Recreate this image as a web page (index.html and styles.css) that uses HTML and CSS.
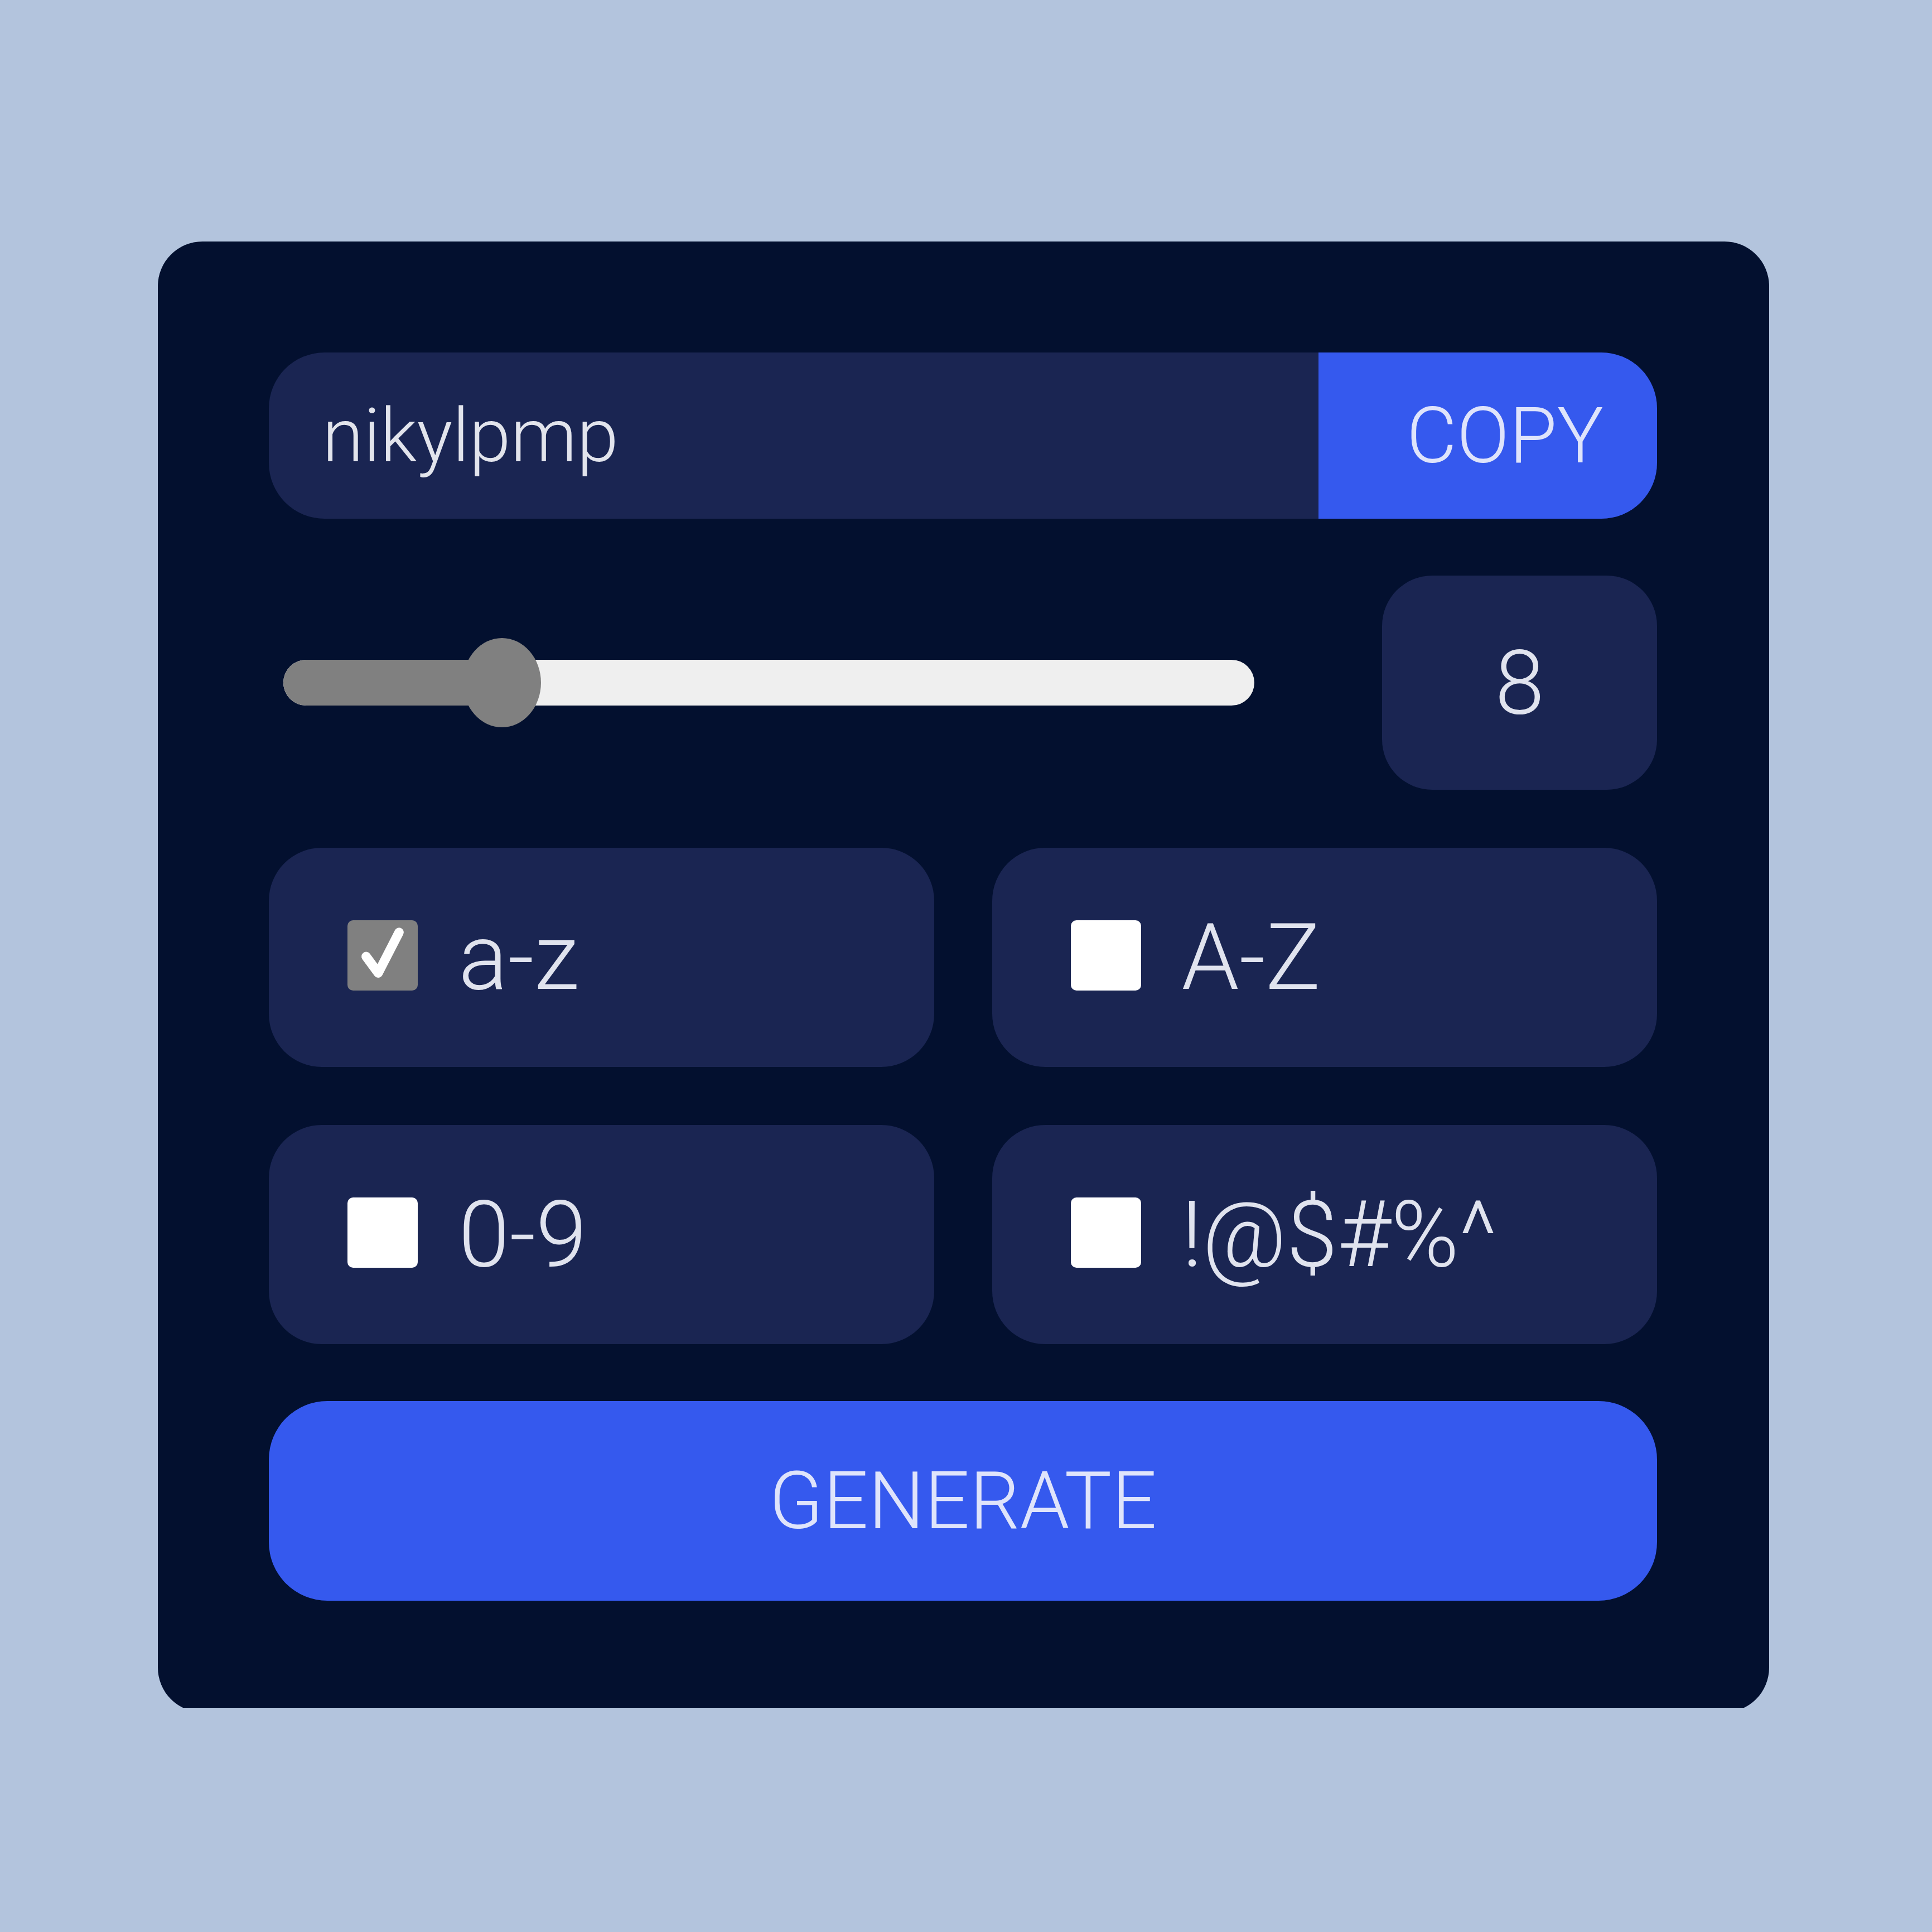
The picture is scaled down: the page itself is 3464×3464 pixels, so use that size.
FILE: index.html
```html
<!DOCTYPE html>
<html lang="en">
<head>
<meta charset="utf-8">
<title>Password Generator</title>
<link rel="stylesheet" href="styles.css">
</head>
<body>
<div class="stage">
  <div class="card">
    <div class="field">
      <div class="pw">nikylpmp</div>
      <div class="copy">COPY</div>
    </div>

    <div class="length-row">
      <div class="slider">
        <div class="track">
          <div class="fill" style="width:22.5%"></div>
          <div class="thumb" style="left:22.5%"></div>
        </div>
      </div>
      <div class="number">8</div>
    </div>

    <div class="options">
      <div class="option">
        <span class="box checked">
          <svg viewBox="0 0 128 128" width="128" height="128"><path d="M34 66 L56 96 L94 22" fill="none" stroke="#ffffff" stroke-width="17" stroke-linecap="round" stroke-linejoin="round"/></svg>
        </span>
        <span class="label">a-z</span>
      </div>
      <div class="option">
        <span class="box"></span>
        <span class="label">A-Z</span>
      </div>
      <div class="option">
        <span class="box"></span>
        <span class="label">0-9</span>
      </div>
      <div class="option">
        <span class="box"></span>
        <span class="label">!@$#%^</span>
      </div>
    </div>

    <div class="generate">GENERATE</div>
  </div>
</div>
</body>
</html>
```

FILE: styles.css
```css
html, body {
  margin: 0;
  padding: 0;
  background: #b3c4dd;
}

body {
  font-family: Roboto, "Liberation Sans", Arial, sans-serif;
  font-weight: 300;
  color: #e0e3ee;
}

.stage {
  height: 3062px;
  overflow: hidden;
  padding: 433px 0 0 283px;
  box-sizing: border-box;
}

.card {
  width: 2889px;
  box-sizing: border-box;
  background: #03102f;
  border-radius: 80px;
  padding: 199px 201px 200px 199px;
  display: flex;
  flex-direction: column;
  gap: 102px;
}

.field {
  display: flex;
  height: 298px;
  border-radius: 100px;
  overflow: hidden;
  background: #1a2552;
}

.pw {
  flex: 1;
  display: flex;
  align-items: center;
  padding-left: 96px;
  font-size: 134px;
  color: #e2e4ec;
}

.copy {
  width: 607px;
  box-sizing: border-box;
  background: #3559ee;
  display: flex;
  align-items: center;
  justify-content: flex-end;
  padding-right: 96px;
  font-size: 139px;
  color: #dfe4fb;
}

.length-row {
  display: flex;
  align-items: center;
  gap: 229px;
  height: 384px;
}

.slider {
  flex: 1;
  padding-left: 26px;
}

.track {
  position: relative;
  height: 82px;
  border-radius: 41px;
  background: #efefef;
}

.fill {
  height: 100%;
  border-radius: 41px 0 0 41px;
  background: #808080;
}

.thumb {
  position: absolute;
  top: 50%;
  width: 140px;
  height: 160px;
  margin-left: -70px;
  margin-top: -80px;
  border-radius: 50%;
  background: #808080;
}

.number {
  width: 493px;
  height: 384px;
  border-radius: 90px;
  background: #1a2552;
  display: flex;
  align-items: center;
  justify-content: center;
  font-size: 160px;
  color: #e0e3ee;
}

.options {
  display: grid;
  grid-template-columns: 1fr 1fr;
  column-gap: 104px;
  row-gap: 104px;
  margin-top: 2px;
}

.option {
  height: 393px;
  border-radius: 95px;
  background: #1a2552;
  display: flex;
  align-items: center;
  padding-left: 141px;
}

.box {
  width: 126px;
  height: 126px;
  border-radius: 10px;
  background: #ffffff;
  margin-right: 73px;
  flex: none;
  display: flex;
  margin-top: -8px;
}

.box.checked {
  background: #808080;
}

.box svg {
  width: 126px;
  height: 126px;
}

.label {
  font-size: 165px;
  color: #e0e3ee;
}

.generate {
  height: 358px;
  border-radius: 105px;
  background: #3559ee;
  display: flex;
  align-items: center;
  justify-content: center;
  font-size: 142px;
  color: #dfe4fb;
}
```
